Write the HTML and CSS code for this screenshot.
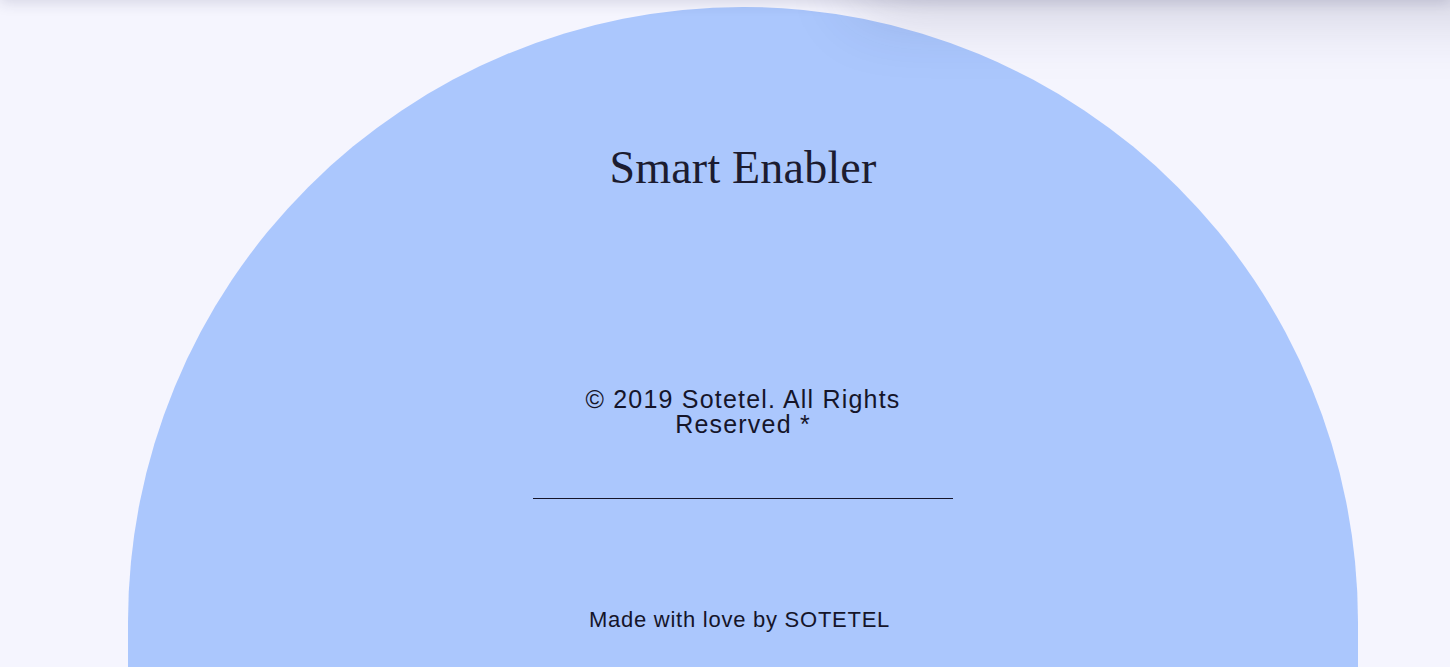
FILE: index.html
```html
<!DOCTYPE html>
<html lang="en">
<head>
<meta charset="utf-8">
<title>Smart Enabler</title>
<link rel="stylesheet" href="styles.css">
</head>
<body>
<div class="shade shade-left"></div>
<div class="shade shade-right"></div>
<footer class="stage">
  <div class="dome">
    <h1 class="title">Smart Enabler</h1>
    <p class="copy">© 2019 Sotetel. All Rights Reserved *</p>
    <hr class="rule">
    <p class="made">Made with love by SOTETEL</p>
  </div>
</footer>
</body>
</html>
```
FILE: styles.css
```css
html, body {
  margin: 0;
  padding: 0;
  height: 100%;
  overflow: hidden;
  background: #f5f5fe;
}
body {
  font-family: "Liberation Sans", Arial, sans-serif;
  color: #15152a;
  position: relative;
}
.stage {
  display: flex;
  padding: 7px 0 0 128px;
}
.dome {
  width: 1230px;
  height: 660px;
  background: #abc7fd;
  border-radius: 615px 615px 0 0;
  display: flex;
  flex-direction: column;
  align-items: center;
}
.title {
  margin: 133px 0 0;
  font-family: "Liberation Serif", "Times New Roman", serif;
  font-weight: 400;
  font-size: 46px;
  line-height: 56px;
  letter-spacing: 0.2px;
  color: #1c1c30;
}
.copy {
  margin: 191px 0 0;
  width: 345px;
  text-align: center;
  font-size: 25px;
  line-height: 25px;
  letter-spacing: 1.2px;
}
.rule {
  margin: 61px 0 0;
  width: 420px;
  border: 0;
  border-top: 1px solid #15152a;
  height: 0;
}
.made {
  margin: 108px 7px 0 0;
  font-size: 22px;
  line-height: 26px;
  letter-spacing: 0.75px;
}
.shade {
  position: absolute;
  top: -100px;
  height: 100px;
  z-index: 2;
  background: #f5f5fe;
}
.shade-left {
  left: 0;
  right: 0;
  box-shadow: 0 2px 14px rgba(40, 40, 80, 0.16);
}
.shade-right {
  left: 860px;
  right: -100px;
  box-shadow: 0 8px 70px rgba(40, 40, 80, 0.22);
}
```
